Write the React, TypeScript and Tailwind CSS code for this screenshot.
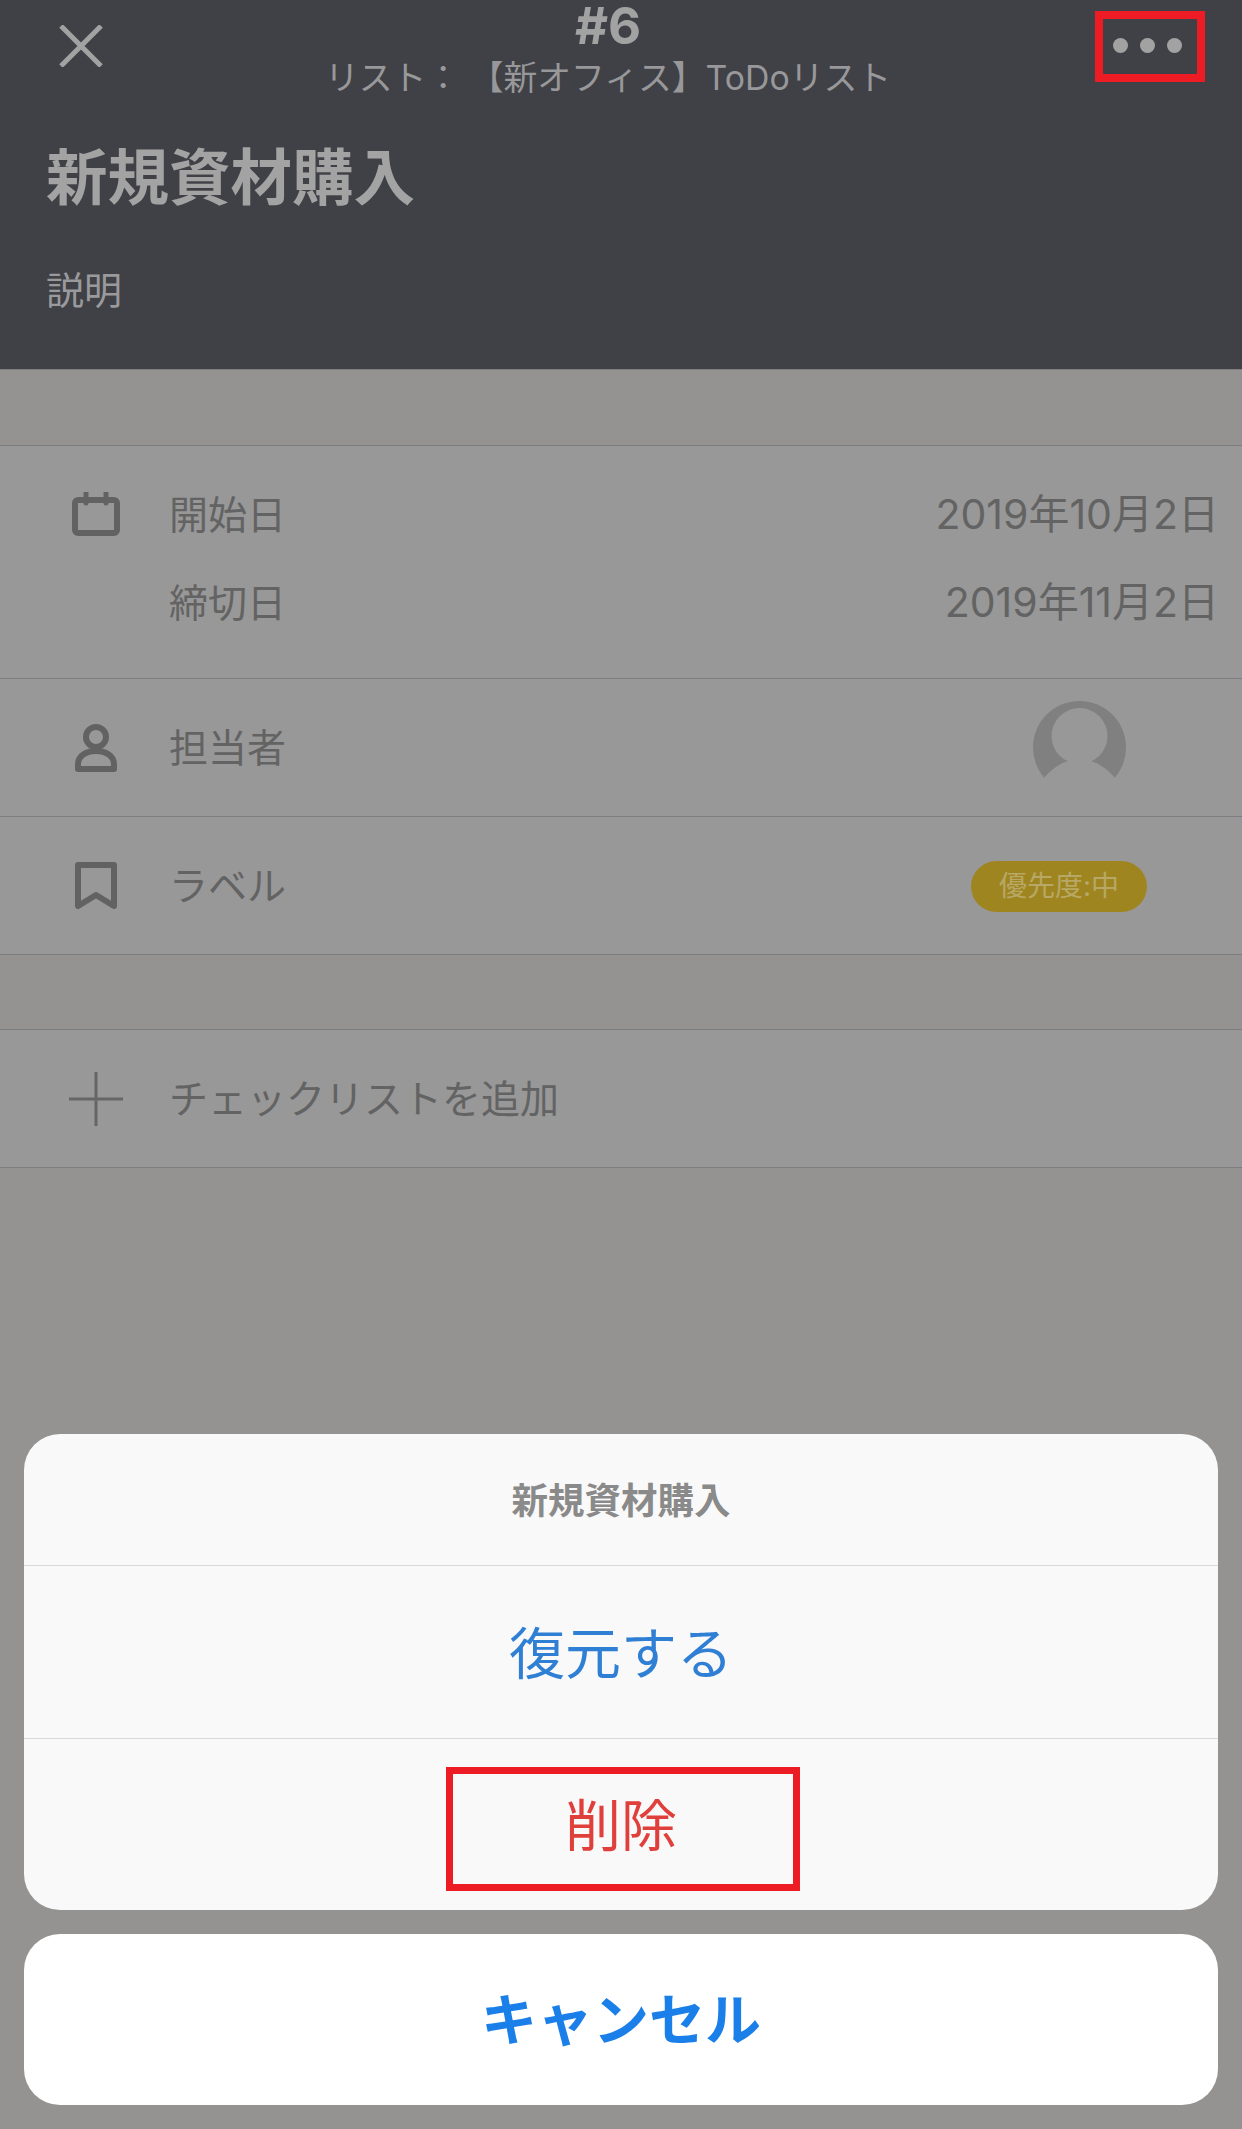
const fontStack = 'font-["Inter","Noto_Sans_CJK_JP",sans-serif]';

function CalendarIcon() {
  return (
    <svg width="48" height="44" viewBox="0 0 48 44" fill="none" stroke="#626262" strokeWidth="6" strokeLinejoin="round">
      <rect x="3" y="8" width="42" height="33" rx="3" />
      <path d="M14 1v10M34 1v10" strokeWidth="5" strokeLinecap="round" />
    </svg>
  );
}

function PersonIcon() {
  return (
    <svg width="42" height="48" viewBox="0 0 42 48" fill="none" stroke="#626262" strokeWidth="6" strokeLinejoin="round">
      <circle cx="21" cy="13" r="10" />
      <path d="M3 45v-5c0-8 8-13 18-13s18 5 18 13v5z" />
    </svg>
  );
}

function BookmarkIcon() {
  return (
    <svg width="42" height="47" viewBox="0 0 42 47" fill="none" stroke="#626262" strokeWidth="6" strokeLinejoin="round">
      <path d="M3 3h36v41L21 33 3 44z" />
    </svg>
  );
}

function PlusIcon() {
  return (
    <svg width="54" height="54" viewBox="0 0 54 54" fill="none" stroke="#666666" strokeWidth="3">
      <path d="M27 0v54M0 27h54" />
    </svg>
  );
}

function Avatar() {
  return (
    <svg width="93" height="79" viewBox="0 0 93 79">
      <circle cx="46.5" cy="46.5" r="46.5" fill="#808080" />
      <circle cx="46.5" cy="35" r="28" fill="#989898" />
      <path d="M0 79V77L11 77C20 66 33 58 46.5 58S73 66 82 77H93V79Z" fill="#989898" />
    </svg>
  );
}

function Row({ icon, label, right }: { icon: React.ReactNode; label: string; right?: React.ReactNode }) {
  return (
    <div className="flex h-[138px] items-center border-b border-[#7d7c7f] bg-[#989898]">
      <div className="flex w-[192px] justify-center">{icon}</div>
      <div className="ml-[-23px] text-[39px] leading-none text-[#636363]">{label}</div>
      {right}
    </div>
  );
}

export default function App() {
  return (
    <div className={`flex h-[2129px] w-[1242px] flex-col overflow-hidden bg-[#949392] ${fontStack}`}>
      <header className="h-[370px] border-b border-[#7f7f80] bg-[#404146]">
        <div className="flex h-[92px] items-start">
          <div className="w-[103px] pl-[59px] pt-[25px]">
            <svg width="44" height="42" viewBox="0 0 44 42" fill="none" stroke="#a2a2a3" strokeWidth="5">
              <path d="M2 1l40 40M42 1L2 41" />
            </svg>
          </div>
          <div className="flex-1 text-center">
            <div className="h-[52px] text-[51px] font-bold leading-[52px] text-[#a2a2a3]">#6</div>
            <div className="mt-[9px] whitespace-nowrap text-[33.8px] leading-[34px] text-[#98989b]">リスト： 【新オフィス】ToDoリスト</div>
          </div>
          <div className="relative flex w-[129px] gap-[12px] pt-[38px]">
            <span className="h-[15px] w-[15px] rounded-full bg-[#a2a2a3]" />
            <span className="h-[15px] w-[15px] rounded-full bg-[#a2a2a3]" />
            <span className="h-[15px] w-[15px] rounded-full bg-[#a2a2a3]" />
            <div className="absolute left-[-18px] top-[11px] h-[71px] w-[110px] border-[8px] border-[#ed1c24]" />
          </div>
        </div>
        <h1 className="mt-[55px] pl-[46px] text-[61.5px] font-bold leading-[62px] text-[#a3a3a4]">新規資材購入</h1>
        <p className="mt-[62px] pl-[46px] text-[38px] leading-[38px] text-[#9a9a9c]">説明</p>
      </header>

      <div className="mt-[75px] border-t border-[#7d7c7f]">
        <div className="flex h-[233px] border-b border-[#7d7c7f] bg-[#989898]">
          <div className="flex w-[192px] justify-center pt-[46px]">
            <CalendarIcon />
          </div>
          <div className="ml-[-23px] flex flex-1 flex-col gap-[47px] pt-[48px] pr-[23px] text-[39px] leading-[41px] text-[#636363]">
            <div className="flex justify-between">
              <span>開始日</span>
              <span className="text-[41px]">2019年10月2日</span>
            </div>
            <div className="flex justify-between">
              <span>締切日</span>
              <span className="text-[41px]">2019年11月2日</span>
            </div>
          </div>
        </div>
        <Row
          icon={<PersonIcon />}
          label="担当者"
          right={
            <div className="ml-auto mr-[116px] mb-[14px]">
              <Avatar />
            </div>
          }
        />
        <Row
          icon={<BookmarkIcon />}
          label="ラベル"
          right={
            <div className="ml-auto mr-[95px] mt-[1px] flex h-[51px] w-[176px] items-center justify-center rounded-full bg-[#9f8520] text-[28px] leading-none text-[#b8a866]">
              優先度:中
            </div>
          }
        />
      </div>

      <div className="mt-[74px] border-t border-[#7d7c7f]">
        <Row icon={<PlusIcon />} label="チェックリストを追加" />
      </div>

      <div className="mt-auto flex flex-col gap-[24px] px-[24px] pb-[24px]">
        <div className="overflow-hidden rounded-[36px] bg-[#f9f9f9]">
          <div className="flex h-[132px] items-center justify-center border-b border-[#d8d8dc] pt-[3px] text-[36.5px] font-bold leading-none text-[#8a8a8a]">
            新規資材購入
          </div>
          <div className="flex h-[173px] items-center justify-center border-b border-[#d8d8dc] pt-[3px] text-[56px] leading-none text-[#2f7fd5]">
            復元する
          </div>
          <div className="relative flex h-[171px] items-center justify-center pt-[3px] text-[56px] leading-none text-[#e0403c]">
            削除
            <div className="absolute left-[422px] top-[28px] h-[124px] w-[354px] border-[7px] border-[#ed1c24]" />
          </div>
        </div>
        <div className="flex h-[171px] items-center justify-center rounded-[36px] bg-white text-[56px] font-bold leading-none text-[#1a7fe8]">
          キャンセル
        </div>
      </div>
    </div>
  );
}
